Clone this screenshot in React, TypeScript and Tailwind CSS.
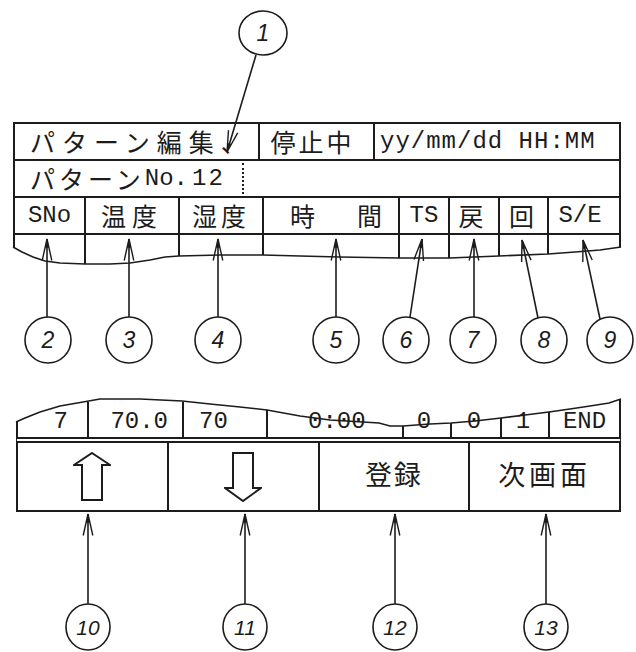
import React from "react";

const INK = "#1c1c1c";

type Pt = [number, number];

const pt = (p: Pt) => `${p[0].toFixed(1)},${p[1].toFixed(1)}`;

// open arrowhead with a small filled tip, pointing at `tip`, coming from `tail`
function ArrowHead({ tip, tail }: { tip: Pt; tail: Pt }) {
  const dx = tail[0] - tip[0];
  const dy = tail[1] - tip[1];
  const len = Math.hypot(dx, dy);
  const ux = dx / len;
  const uy = dy / len;
  const at = (a: number, l: number): Pt => {
    const c = Math.cos(a);
    const s = Math.sin(a);
    return [tip[0] + l * (ux * c - uy * s), tip[1] + l * (ux * s + uy * c)];
  };
  return (
    <g>
      <polyline points={`${pt(at(0.22, 22))} ${pt(tip)} ${pt(at(-0.22, 22))}`} fill="none" stroke={INK} strokeWidth={1.4} />
      <polygon points={`${pt(tip)} ${pt(at(0.2, 9))} ${pt(at(-0.2, 9))}`} fill={INK} />
    </g>
  );
}

type Callout = { n: string; cx: number; cy: number; rx: number; ry: number; tail: Pt; tip: Pt };

const callouts: Callout[] = [
  { n: "1", cx: 263, cy: 33, rx: 24, ry: 22, tail: [256, 55], tip: [227, 152] },
  { n: "2", cx: 48, cy: 340, rx: 23, ry: 23, tail: [47, 317], tip: [47, 239] },
  { n: "3", cx: 129, cy: 340, rx: 23, ry: 23, tail: [129, 317], tip: [129, 239] },
  { n: "4", cx: 218, cy: 340, rx: 23, ry: 23, tail: [218, 317], tip: [218, 239] },
  { n: "5", cx: 336, cy: 340, rx: 23, ry: 23, tail: [336, 317], tip: [336, 239] },
  { n: "6", cx: 406, cy: 340, rx: 23, ry: 23, tail: [410, 317], tip: [422, 239] },
  { n: "7", cx: 473, cy: 340, rx: 23, ry: 23, tail: [474, 317], tip: [474, 239] },
  { n: "8", cx: 544, cy: 340, rx: 23, ry: 23, tail: [538, 318], tip: [522, 240] },
  { n: "9", cx: 610, cy: 340, rx: 23, ry: 23, tail: [600, 319], tip: [583, 240] },
  { n: "10", cx: 88, cy: 627, rx: 22, ry: 23, tail: [88, 604], tip: [88, 514] },
  { n: "11", cx: 245, cy: 627, rx: 22, ry: 23, tail: [245, 604], tip: [245, 514] },
  { n: "12", cx: 395, cy: 627, rx: 22, ry: 23, tail: [395, 604], tip: [395, 514] },
  { n: "13", cx: 546, cy: 627, rx: 22, ry: 23, tail: [546, 604], tip: [546, 514] },
];

const upperWave =
  "13,247 22,252 33,257 45,261 60,263 85,264 110,264 130,263 150,260 165,257 179,256 220,255 263,255 300,256 340,257 399,258 449,258 499,256 548,254 575,252 600,250 621,247";

const lowerWave =
  "16,422 25,418 40,412 60,406 83,402 100,399 140,399 182,401 210,404 240,407 267,410 300,416 330,420 379,423 390,426 403,426 430,424 451,423 475,421 501,418 525,415 549,412 570,409 590,406 609,403 621,399";

function Callouts() {
  return (
    <svg className="pointer-events-none absolute inset-0" width={636} height={652} viewBox="0 0 636 652">
      <polyline points={upperWave} fill="none" stroke={INK} strokeWidth={1.6} />
      <polyline points={lowerWave} fill="none" stroke={INK} strokeWidth={1.6} />
      {callouts.map((c) => (
        <g key={c.n}>
          <ellipse cx={c.cx} cy={c.cy} rx={c.rx} ry={c.ry} fill="none" stroke={INK} strokeWidth={1.6} />
          <line x1={c.tail[0]} y1={c.tail[1]} x2={c.tip[0]} y2={c.tip[1]} stroke={INK} strokeWidth={1.6} />
          <ArrowHead tip={c.tip} tail={c.tail} />
          <text
            x={c.cx}
            y={c.cy + 8}
            textAnchor="middle"
            fontFamily="'Liberation Sans', Arial, sans-serif"
            fontStyle="italic"
            fontSize={c.n.length > 1 ? 21 : 23}
            fill={INK}
          >
            {c.n}
          </text>
        </g>
      ))}
    </svg>
  );
}

const jp = "font-['Noto_Sans_CJK_JP','Noto_Sans',sans-serif]";
const mono = "font-['Liberation_Mono','DejaVu_Sans_Mono',monospace]";

function UpArrow() {
  return (
    <svg width={38} height={50} viewBox="0 0 38 50">
      <polygon points="19,1 37,13 29,13 29,48 9,48 9,13 1,13" fill="none" stroke={INK} strokeWidth={2} />
    </svg>
  );
}

function DownArrow() {
  return (
    <svg width={38} height={50} viewBox="0 0 38 50">
      <polygon points="9,1 29,1 29,36 37,36 19,49 1,36 9,36" fill="none" stroke={INK} strokeWidth={2} />
    </svg>
  );
}

function UpperTable() {
  const heads = [
    { w: "w-[71px]", el: <span className={`${mono} text-[24px]`}>SNo</span> },
    { w: "w-[94px]", el: <span className={`${jp} text-[25px] tracking-[6px]`}>温度</span> },
    { w: "w-[84px]", el: <span className={`${jp} text-[25px] tracking-[4px]`}>湿度</span> },
    {
      w: "w-[136px]",
      el: (
        <span className={`${jp} flex gap-[42px] pl-[10px] text-[25px]`}>
          <span>時</span>
          <span>間</span>
        </span>
      ),
    },
    { w: "w-[50px]", el: <span className={`${mono} text-[24px]`}>TS</span> },
    { w: "w-[50px]", el: <span className={`${jp} pr-[6px] text-[25px]`}>戻</span> },
    { w: "w-[49px]", el: <span className={`${jp} pr-[4px] text-[25px]`}>回</span> },
  ];
  const strip = [
    { w: "w-[71px]", h: "h-[29px]" },
    { w: "w-[94px]", h: "h-[21px]" },
    { w: "w-[84px]", h: "h-[20px]" },
    { w: "w-[136px]", h: "h-[23px]" },
    { w: "w-[50px]", h: "h-[23px]" },
    { w: "w-[50px]", h: "h-[21px]" },
    { w: "w-[49px]", h: "h-[19px]" },
  ];
  return (
    <div className="ml-[13px] w-[608px]">
      <div className="border-x-2 border-t-2 border-[#1c1c1c]">
        {/* title / status / clock */}
        <div className="flex h-[37px] border-b-2 border-[#1c1c1c]">
          <div className={`${jp} flex w-[245px] items-center border-r-2 border-[#1c1c1c] pl-[15px] text-[25px] tracking-[7px]`}>
            パターン編集、
          </div>
          <div className={`${jp} flex w-[115px] items-center justify-center border-r-2 border-[#1c1c1c] pr-[8px] text-[25px] tracking-[3px]`}>
            停止中
          </div>
          <div className={`${mono} flex flex-1 items-center pl-[5px] text-[24px] tracking-[1px]`}>yy/mm/dd HH:MM</div>
        </div>

        {/* pattern number */}
        <div className="flex h-[37px] items-stretch border-b-2 border-[#1c1c1c]">
          <div className="flex w-[227px] items-center pl-[15px]">
            <span className={`${jp} text-[25px] tracking-[4px]`}>パターン</span>
            <span className={`${mono} text-[24px]`}>No.</span>
            <span className={`${mono} pl-[4px] text-[24px] tracking-[2px]`}>12</span>
          </div>
          <div className="my-[2px] border-l-2 border-dotted border-[#1c1c1c]" />
        </div>

        {/* column headings */}
        <div className="flex h-[37px] border-b-2 border-[#1c1c1c]">
          {heads.map((h, i) => (
            <div key={i} className={`${h.w} flex items-center justify-center border-r-2 border-[#1c1c1c]`}>
              {h.el}
            </div>
          ))}
          <div className={`${mono} flex flex-1 items-center justify-center pr-[8px] text-[24px]`}>S/E</div>
        </div>
      </div>

      {/* torn-off strip below the headings */}
      <div className="flex h-[30px] items-start">
        <div className="h-[12px] w-[2px] bg-[#1c1c1c]" />
        {strip.map((s, i) => (
          <div key={i} className={`${s.w} ${s.h} border-r-2 border-[#1c1c1c]`} />
        ))}
        <div className="flex-1" />
        <div className="h-[12px] w-[2px] bg-[#1c1c1c]" />
      </div>
    </div>
  );
}

function LowerTable() {
  const cells = [
    { w: "w-[69px]", cls: "justify-end pr-[19px]", v: "7", div: "h-[35px]" },
    { w: "w-[93px]", cls: "justify-end pr-[14px]", v: "70.0", div: "h-[35px]" },
    { w: "w-[82px]", cls: "justify-start pl-[15px]", v: "70", div: "h-[27px]" },
    { w: "w-[134px]", cls: "justify-start pl-[40px]", v: "0:00", div: "h-[11px]" },
    { w: "w-[46px]", cls: "justify-center pr-[6px]", v: "0", div: "h-[14px]" },
    { w: "w-[48px]", cls: "justify-center pr-[4px]", v: "0", div: "h-[19px]" },
    { w: "w-[46px]", cls: "justify-center pr-[4px]", v: "1", div: "h-[25px]" },
  ];
  return (
    <div className="ml-[16px] mt-[133px] w-[605px]">
      {/* data row, torn along its top edge */}
      <div className="flex h-[39px] items-end">
        <div className="h-[15px] w-[2px] bg-[#1c1c1c]" />
        {cells.map((c, i) => (
          <React.Fragment key={i}>
            <div className={`${c.w} ${c.cls} ${mono} flex h-full items-end pb-[3px] text-[24px] leading-none`}>{c.v}</div>
            <div className={`${c.div} w-[2px] bg-[#1c1c1c]`} />
          </React.Fragment>
        ))}
        <div className={`${mono} flex h-full flex-1 items-end justify-center pb-[3px] text-[24px] leading-none`}>END</div>
        <div className="h-[37px] w-[2px] bg-[#1c1c1c]" />
      </div>

      {/* soft keys */}
      <div className="flex h-[75px] border-x-2 border-b-2 border-t-[6px] border-double border-[#1c1c1c]">
        <div className="flex flex-1 items-center justify-center border-r-2 border-[#1c1c1c]">
          <UpArrow />
        </div>
        <div className="flex flex-1 items-center justify-center border-r-2 border-[#1c1c1c]">
          <DownArrow />
        </div>
        <div className={`${jp} flex flex-1 items-center justify-center border-r-2 border-[#1c1c1c] pb-[4px] text-[27px] tracking-[2px]`}>
          登録
        </div>
        <div className={`${jp} flex flex-1 items-center justify-center pb-[4px] text-[27px] tracking-[4px]`}>次画面</div>
      </div>
    </div>
  );
}

export default function App() {
  return (
    <div className="relative h-[652px] w-[636px] overflow-hidden bg-white text-[#1c1c1c]">
      <div className="flex flex-col pt-[122px]">
        <UpperTable />
        <LowerTable />
      </div>
      <Callouts />
    </div>
  );
}
